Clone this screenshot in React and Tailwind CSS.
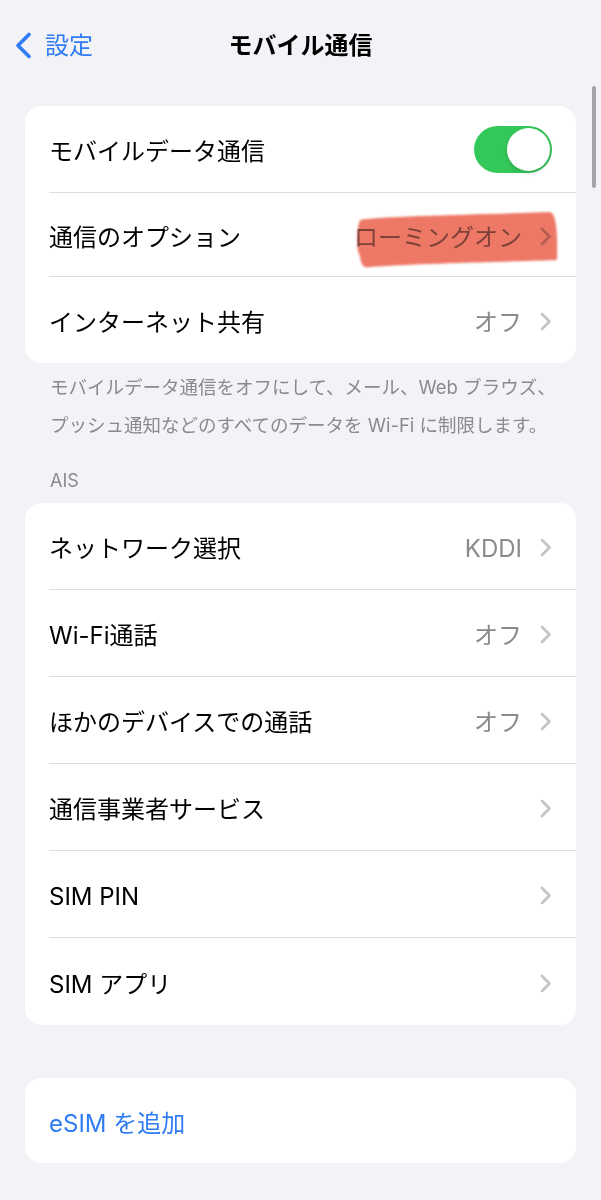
import React from "react";

const font = { fontFamily: '"Inter", "Noto Sans CJK JP", sans-serif' };

function Chevron() {
  return (
    <svg width="12" height="19" viewBox="0 0 12 19" className="shrink-0">
      <path d="M2 2 L9.5 9.5 L2 17" fill="none" stroke="#c4c4c7" strokeWidth="2.8" strokeLinecap="round" strokeLinejoin="round" />
    </svg>
  );
}

function Toggle() {
  return (
    <div className="w-[78px] h-[47px] rounded-full bg-[#34c759] flex items-center justify-end pr-[2px]">
      <div className="w-[43px] h-[43px] rounded-full bg-white shadow-[0_2px_4px_rgba(0,0,0,0.15)]" />
    </div>
  );
}

function Row({ label, value, chevron = true, toggle = false, last = false, h = "h-[87px]", highlight = false, blue = false }) {
  return (
    <div className={`${h} pl-[24px] flex`}>
      <div className={`flex-1 flex items-center pr-[24px] ${last ? "" : "border-b border-[#dededf]"}`}>
        <span className={`flex-1 text-[24px] leading-[30px] pt-[6px] ${blue ? "text-[#2f7cf4]" : "text-black"}`}>{label}</span>
        {toggle && <Toggle />}
        {value && (
          <span className="relative text-[24px] leading-[30px] pt-[6px] text-[#8a8a8e] mr-[18px]">
            {value}
          </span>
        )}
        {chevron && (
          <span className="relative flex pt-[3px]">
            <Chevron />
            {highlight && (
              <svg
                width="206"
                height="62"
                viewBox="0 0 206 62"
                className="absolute right-[-8px] top-[-14px] mix-blend-multiply pointer-events-none"
                style={{ filter: "blur(1px)" }}
              >
                <path
                  d="M6 10 C 30 6, 120 5, 196 2 C 202 4, 204 20, 203 50 C 150 52, 70 53, 16 57 C 9 59, 7 54, 6 46 C 2 40, 2 20, 6 10 Z"
                  fill="#ec715e"
                  opacity="0.95"
                />
              </svg>
            )}
          </span>
        )}
      </div>
    </div>
  );
}

export default function App() {
  return (
    <div className="relative w-[601px] min-h-[1200px] bg-[#f2f2f7] overflow-hidden" style={font}>
      {/* Nav bar */}
      <div className="h-[90px] grid grid-cols-[1fr_auto_1fr] items-center">
        <div className="flex items-center pl-[14px] gap-[12px] text-[#2f7cf4]">
          <svg width="19" height="27" viewBox="0 0 19 27">
            <path d="M15 2.5 L4 13.5 L15 24.5" fill="none" stroke="#2f7cf4" strokeWidth="3.6" strokeLinecap="round" strokeLinejoin="round" />
          </svg>
          <span className="text-[24px] leading-[30px] pt-[2px]">設定</span>
        </div>
        <div className="text-[24px] leading-[30px] pt-[2px] font-bold text-black">モバイル通信</div>
        <div />
      </div>

      {/* scroll indicator */}
      <div className="absolute left-[592px] top-[86px] w-[4px] h-[102px] rounded-full bg-[#a3a3a8]" />

      <div className="mx-[25px]">
        <div className="mt-[16px] bg-white rounded-[16px] overflow-hidden">
          <Row h="h-[87px]" label="モバイルデータ通信" toggle chevron={false} />
          <Row h="h-[84px]" label="通信のオプション" value="ローミングオン" highlight />
          <Row h="h-[86px]" label="インターネット共有" value="オフ" last />
        </div>

        <div className="pt-[5px] pl-[25px] pr-[5px] text-[18.5px] leading-[38px] text-[#8a8a8e]">
          <div>モバイルデータ通信をオフにして、メール、Web ブラウズ、</div>
          <div>プッシュ通知などのすべてのデータを Wi-Fi に制限します。</div>
        </div>

        <div className="mt-[25px] pl-[25px] text-[18px] leading-[24px] text-[#8a8a8e]">AIS</div>

        <div className="mt-[10px] bg-white rounded-[16px] overflow-hidden">
          <Row label="ネットワーク選択" value="KDDI" />
          <Row label="Wi-Fi通話" value="オフ" />
          <Row label="ほかのデバイスでの通話" value="オフ" />
          <Row label="通信事業者サービス" />
          <Row label="SIM PIN" />
          <Row label="SIM アプリ" last />
        </div>

        <div className="mt-[53px] bg-white rounded-[16px] overflow-hidden">
          <Row h="h-[85px]" label="eSIM を追加" chevron={false} blue last />
        </div>
      </div>
    </div>
  );
}
